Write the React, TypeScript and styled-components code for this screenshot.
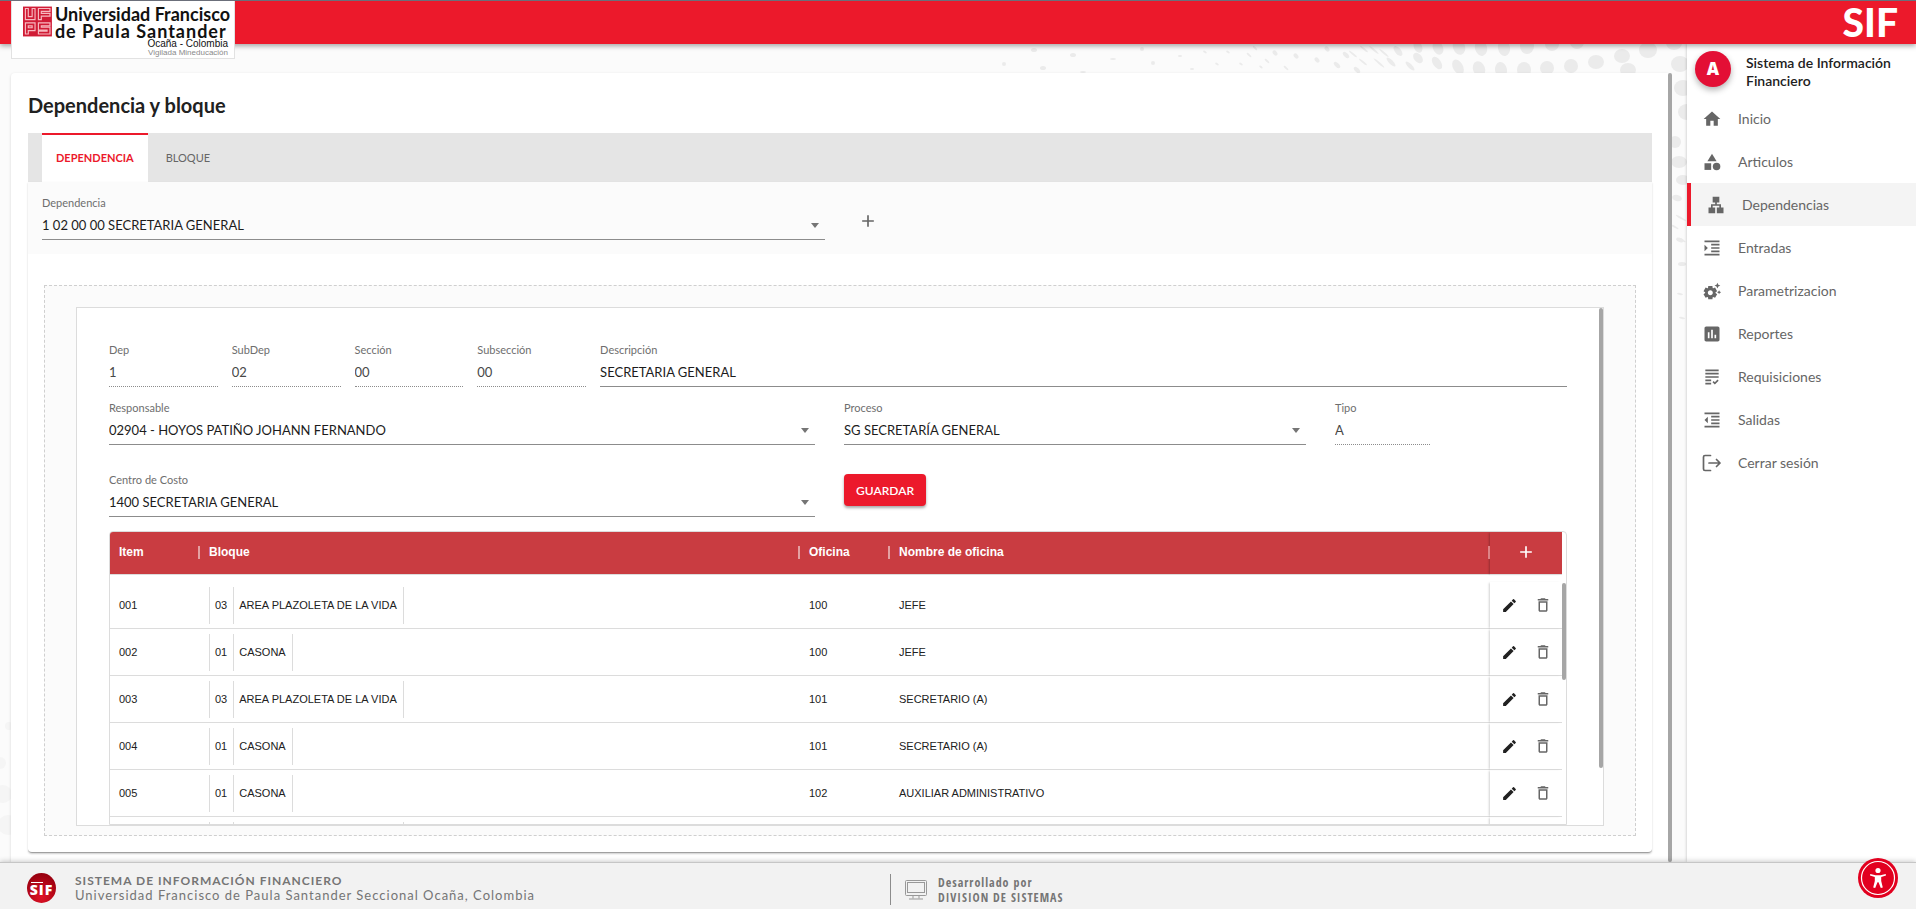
import React from "react";
import styled, { createGlobalStyle, css } from "styled-components";
import {
  MdAdd,
  MdAssessment,
  MdCategory,
  MdDeleteOutline,
  MdEdit,
  MdFormatIndentDecrease,
  MdFormatIndentIncrease,
  MdGrading,
  MdHome,
  MdLan,
  MdSettingsSuggest,
} from "react-icons/md";

const RED = "#ec192b";
const LINE = "#dcdcdc";
const THUMB = "#a6a6a6";
const SANS = '"Lato", "Open Sans", sans-serif';

const GlobalStyle = createGlobalStyle`
  *, *::before, *::after { box-sizing: border-box; }
  body { margin: 0; font-family: ${SANS}; color: #212121; background: #fbfbfb; }
  button, input, select { font: inherit; color: inherit; }
`;

/* ---------- Shell ---------- */

const Shell = styled.div`
  display: flex;
  flex-direction: column;
  height: 100vh;
  overflow: hidden;
`;

const Header = styled.header`
  position: relative;
  z-index: 2;
  display: flex;
  justify-content: space-between;
  align-items: flex-start;
  height: 44px;
  padding: 0 18px 0 11px;
  border-top: 1px solid #6b6f7a;
  background: ${RED};
  box-shadow: 0 2px 5px rgba(0, 0, 0, 0.35);
`;

const Brand = styled.a`
  display: flex;
  gap: 3px;
  width: 224px;
  height: 58px;
  padding: 5px 4px 0 11px;
  border: 1px solid #e2e2e2;
  border-top: 0;
  background: #fff;
  color: #111;
  text-decoration: none;
  white-space: nowrap;
`;

const BrandText = styled.span`
  display: flex;
  flex-direction: column;
  font-weight: 700;
  font-size: 18px;
  line-height: 17px;
`;

const BrandSecond = styled.span`
  letter-spacing: 1px;
`;

const BrandPlace = styled.span`
  align-self: flex-end;
  padding-right: 2px;
  font-family: "Liberation Sans", sans-serif;
  font-weight: 400;
  font-size: 10px;
  line-height: 8px;
`;

const BrandNote = styled(BrandPlace)`
  font-size: 8px;
  line-height: 9px;
  color: #8a8a8a;
`;

const AppName = styled.span`
  font-weight: 900;
  font-size: 39px;
  line-height: 42px;
  color: #fff;
`;

const Body = styled.div`
  position: relative;
  display: flex;
  flex: 1;
  min-height: 0;
`;

const Backdrop = styled.svg`
  position: absolute;
  top: 0;
  right: 229px;
`;

const CornerBackdrop = styled.svg`
  position: absolute;
  bottom: 0;
  left: 0;
`;

const Main = styled.main`
  position: relative;
  display: flex;
  flex: 1;
  min-width: 0;
  padding: 29px 15px 0 11px;
`;

const Card = styled.section`
  display: flex;
  flex: 1;
  flex-direction: column;
  min-width: 0;
  padding: 17px 16px 9px 17px;
  border-radius: 4px 0 0 0;
  background: #fff;
  box-shadow: 0 1px 3px rgba(0, 0, 0, 0.15);
`;

const Thumb = styled.div<{ $length: string }>`
  flex: none;
  width: 4px;
  height: ${(p) => p.$length};
  border-radius: 2px;
  background: ${THUMB};
`;

const Title = styled.h1`
  margin: 0 0 13px;
  font-size: 20px;
  line-height: 30px;
  font-weight: 700;
`;

/* ---------- Tabs ---------- */

const Tabs = styled.div`
  display: flex;
  flex: none;
  height: 49px;
  padding-left: 14px;
  background: #e5e5e5;
`;

const Tab = styled.button<{ $active?: boolean }>`
  padding: 0 ${(p) => (p.$active ? "14px" : "18px")} 2px;
  border: 0;
  border-top: 2px solid transparent;
  background: none;
  font-size: 11px;
  color: #666;
  ${(p) =>
    p.$active &&
    css`
      border-top-color: ${RED};
      background: #fff;
      color: ${RED};
      font-weight: 700;
    `}
`;

const Panel = styled.div`
  display: flex;
  flex: 1;
  flex-direction: column;
  min-height: 0;
  border-bottom: 1px solid #a0a0a0;
  border-radius: 0 0 4px 4px;
  box-shadow: 0 1px 2px rgba(0, 0, 0, 0.2);
`;

const FilterBar = styled.div`
  display: grid;
  grid-template-columns: 782fr 29px 797fr;
  height: 72px;
  padding: 12px 0 0 14px;
  background: #fbfbfb;
`;

const Dashed = styled.div`
  display: flex;
  flex: 1;
  min-height: 0;
  margin: 31px 16px 16px;
  padding: 21px 31px 9px;
  border: 1px dashed #cfcfcf;
  background: #fbfbfb;
`;

const Sheet = styled.div`
  display: flex;
  flex: 1;
  min-width: 0;
  border: 1px solid ${LINE};
  background: #fff;
`;

const Form = styled.form`
  display: flex;
  flex: 1;
  flex-direction: column;
  min-width: 0;
  padding: 33px 32px 0 32px;
`;

/* ---------- Fields ---------- */

const FieldBox = styled.div<{ $disabled?: boolean }>`
  position: relative;
  display: flex;
  flex-direction: column;
  min-width: 0;
  height: 46px;
  border-bottom: 1px ${(p) => (p.$disabled ? "dotted" : "solid")} #8c8c8c;
  label {
    font-size: 11px;
    line-height: 18px;
    color: #6e6e6e;
  }
  input,
  select {
    width: 100%;
    height: 26px;
    padding: 0;
    border: 0;
    outline: 0;
    appearance: none;
    background: none;
    font-size: 13px;
    opacity: 1;
    color: ${(p) => (p.$disabled ? "#484848" : "#1c1c1c")};
  }
  svg {
    position: absolute;
    right: 6px;
    bottom: 11px;
    pointer-events: none;
  }
`;

const CodesRow = styled.div`
  display: grid;
  grid-template-columns: repeat(4, 9fr) 80fr;
  gap: 14px;
  margin-bottom: 12px;
`;

const WideRow = styled.div`
  display: grid;
  grid-template-columns: 706fr 462fr 232fr;
  gap: 29px;
`;

const CostRow = styled(WideRow)`
  margin-top: 26px;
`;

const TypeSlot = styled.div`
  width: 41%;
`;

const SaveButton = styled.button`
  justify-self: start;
  height: 32px;
  margin-top: 3px;
  padding: 0 12px;
  border: 0;
  border-radius: 4px;
  background: ${RED};
  color: #fff;
  font-size: 12px;
  font-weight: 600;
  box-shadow: 0 2px 3px rgba(0, 0, 0, 0.35);
`;

const IconButton = styled.button`
  display: inline-flex;
  align-items: center;
  justify-content: center;
  padding: 0;
  border: 0;
  background: none;
`;

const AddDependency = styled(IconButton)`
  grid-column: 3;
  justify-self: start;
  height: 54px;
  padding-left: 4px;
  color: #666;
`;

function Select({ id, label, value }: { id: string; label: string; value: string }) {
  return (
    <FieldBox>
      <label htmlFor={id}>{label}</label>
      <select id={id} defaultValue={value}>
        <option>{value}</option>
      </select>
      <svg width="8" height="5" viewBox="0 0 8 5" fill="#757575">
        <path d="M0 0h8L4 5z" />
      </svg>
    </FieldBox>
  );
}

function Input(p: { id: string; label: string; value: string; disabled?: boolean }) {
  return (
    <FieldBox $disabled={p.disabled}>
      <label htmlFor={p.id}>{p.label}</label>
      <input id={p.id} defaultValue={p.value} disabled={p.disabled} />
    </FieldBox>
  );
}

/* ---------- Offices table ---------- */

const TableBox = styled.div`
  display: flex;
  flex: 1;
  align-items: flex-start;
  min-height: 0;
  margin-top: 14px;
  overflow: hidden;
  border: 1px solid ${LINE};
  border-radius: 4px 4px 0 0;
`;

const TableScroller = styled.div`
  flex: 1;
  min-width: 0;
`;

const Table = styled.table`
  width: 100%;
  table-layout: fixed;
  border-collapse: separate;
  border-spacing: 0;
  font-family: "Liberation Sans", Arial, sans-serif;
  font-size: 11px;
  tbody::before {
    content: "";
    display: table-row;
    height: 7px;
  }
`;

const Th = styled.th<{ $width?: number }>`
  width: ${(p) => (p.$width ? `${p.$width}px` : "auto")};
  height: 43px;
  padding: 0 0 2px 9px;
  border-bottom: 1px solid ${LINE};
  background: #c93c41;
  color: #fff;
  font-size: 12px;
  text-align: left;
`;

const Heading = styled.span<{ $last?: boolean }>`
  display: flex;
  align-items: center;
  justify-content: space-between;
  &::after {
    content: "";
    width: 2px;
    height: 13px;
    background: ${(p) => (p.$last ? "#dd8487" : "#e4a0a2")};
  }
`;

const ActionTh = styled(Th)`
  padding: 0;
  text-align: center;
  box-shadow: -2px 0 2px -1px rgba(0, 0, 0, 0.25);
`;

const Td = styled.td`
  height: 47px;
  padding: 0 0 0 9px;
  border-bottom: 1px solid ${LINE};
`;

const ActionTd = styled(Td)`
  padding: 0 0 0 11px;
  box-shadow: -2px 0 2px -1px rgba(0, 0, 0, 0.18);
`;

const Actions = styled.span`
  display: flex;
  gap: 16px;
`;

const Block = styled.span`
  display: inline-flex;
  height: 37px;
  line-height: 36px;
  border-left: 1px solid ${LINE};
  vertical-align: middle;
`;

const BlockPart = styled.span<{ $min?: number }>`
  min-width: ${(p) => p.$min ?? 0}px;
  padding: 0 6px 0 5px;
  border-right: 1px solid ${LINE};
  white-space: nowrap;
`;

const TableTrack = styled.div`
  padding-top: 51px;
`;

type Office = { item: string; code: string; block: string; office: string; name: string };

const OFFICES: Office[] = [
  { item: "001", code: "03", block: "AREA PLAZOLETA DE LA VIDA", office: "100", name: "JEFE" },
  { item: "002", code: "01", block: "CASONA", office: "100", name: "JEFE" },
  { item: "003", code: "03", block: "AREA PLAZOLETA DE LA VIDA", office: "101", name: "SECRETARIO (A)" },
  { item: "004", code: "01", block: "CASONA", office: "101", name: "SECRETARIO (A)" },
  { item: "005", code: "01", block: "CASONA", office: "102", name: "AUXILIAR ADMINISTRATIVO" },
];

function OfficesTable() {
  return (
    <TableBox>
      <TableScroller>
        <Table>
          <thead>
            <tr>
              <Th $width={90}><Heading>Item</Heading></Th>
              <Th><Heading>Bloque</Heading></Th>
              <Th $width={90}><Heading>Oficina</Heading></Th>
              <Th><Heading $last>Nombre de oficina</Heading></Th>
              <ActionTh $width={72}>
                <IconButton type="button" aria-label="Agregar oficina">
                  <MdAdd size={20} />
                </IconButton>
              </ActionTh>
            </tr>
          </thead>
          <tbody>
            {OFFICES.map((o) => (
              <tr key={o.item}>
                <Td>{o.item}</Td>
                <Td>
                  <Block>
                    <BlockPart>{o.code}</BlockPart>
                    <BlockPart>{o.block}</BlockPart>
                  </Block>
                </Td>
                <Td>{o.office}</Td>
                <Td>{o.name}</Td>
                <ActionTd>
                  <Actions>
                    <IconButton type="button" aria-label="Editar">
                      <MdEdit size={17} color="#212121" />
                    </IconButton>
                    <IconButton type="button" aria-label="Eliminar">
                      <MdDeleteOutline size={18} color="#666" />
                    </IconButton>
                  </Actions>
                </ActionTd>
              </tr>
            ))}
            <tr>
              <Td />
              <Td>
                <Block>
                  <BlockPart $min={24} />
                  <BlockPart $min={170} />
                </Block>
              </Td>
              <Td />
              <Td />
              <ActionTd />
            </tr>
          </tbody>
        </Table>
      </TableScroller>
      <TableTrack>
        <Thumb $length="97px" />
      </TableTrack>
    </TableBox>
  );
}

/* ---------- Sidebar ---------- */

const Sidebar = styled.aside`
  position: relative;
  flex: none;
  width: 229px;
  background: #fff;
  box-shadow: 0 0 3px rgba(0, 0, 0, 0.25);
`;

const Profile = styled.div`
  display: flex;
  gap: 15px;
  height: 53px;
  padding: 7px 16px 0 8px;
`;

const Avatar = styled.span`
  flex: none;
  width: 36px;
  height: 36px;
  border-radius: 50%;
  background: #e30f35;
  color: #fff;
  font-family: "Open Sans", sans-serif;
  font-size: 17px;
  font-weight: 800;
  line-height: 36px;
  text-align: center;
  box-shadow: 0 3px 6px rgba(0, 0, 0, 0.3);
`;

const ProfileName = styled.strong`
  padding-top: 3px;
  font-size: 14px;
  line-height: 18px;
  font-weight: 600;
`;

const NavLink = styled.a<{ $active?: boolean }>`
  display: flex;
  align-items: center;
  gap: 16px;
  height: 43px;
  padding-left: 15px;
  color: #666;
  font-size: 14px;
  text-decoration: none;
  svg {
    width: 20px;
    height: 20px;
  }
  ${(p) =>
    p.$active &&
    css`
      border-left: 4px solid ${RED};
      background: #f4f4f4;
    `}
`;

function LogoutIcon() {
  return (
    <svg viewBox="0 0 20 20" fill="none" stroke="#666" strokeWidth="1.7" strokeLinecap="round" strokeLinejoin="round">
      <path d="M8.500 2.500H3Q1.500 2.500 1.500 4v12q0 1.500 1.500 1.500h5.500M7 10h11M14.500 6.500L18 10l-3.500 3.500" />
    </svg>
  );
}

const NAV = [
  { label: "Inicio", icon: MdHome },
  { label: "Articulos", icon: MdCategory },
  { label: "Dependencias", icon: MdLan, active: true },
  { label: "Entradas", icon: MdFormatIndentIncrease },
  { label: "Parametrizacion", icon: MdSettingsSuggest },
  { label: "Reportes", icon: MdAssessment },
  { label: "Requisiciones", icon: MdGrading },
  { label: "Salidas", icon: MdFormatIndentDecrease },
  { label: "Cerrar sesión", icon: LogoutIcon },
];

/* ---------- Footer ---------- */

const Footer = styled.footer`
  position: relative;
  z-index: 2;
  display: grid;
  grid-template-columns: 890fr 1026fr;
  height: 47px;
  border-top: 1px solid #c6c6c6;
  background: #f2f2f2;
  box-shadow: 0 -1px 5px rgba(0, 0, 0, 0.2);
  color: #757575;
`;

const FooterLeft = styled.div`
  display: flex;
  align-items: center;
  gap: 19px;
  padding: 4px 0 0 27px;
  font-size: 13px;
  line-height: 15px;
  letter-spacing: 1px;
  white-space: nowrap;
  strong {
    font-size: 12px;
  }
`;

const Lines = styled.div`
  display: flex;
  flex-direction: column;
`;

const FooterRight = styled.div`
  display: flex;
  align-items: center;
  align-self: end;
  gap: 11px;
  height: 31px;
  margin-bottom: 4px;
  padding-left: 14px;
  border-left: 1px solid #8c8c8c;
  font-family: "Liberation Sans Narrow", "Open Sans Condensed", "Lato", sans-serif;
  font-weight: 300;
  font-size: 12px;
  line-height: 15px;
  letter-spacing: 1px;
`;

const AccessButton = styled(IconButton)`
  position: fixed;
  z-index: 3;
  right: 18px;
  bottom: 11px;
`;

function Crest() {
  return (
    <svg width="30" height="31" viewBox="0 0 30 31">
      <rect width="30" height="31" fill="#d01c36" />
      <g fill="none" stroke="#f7b9c0" strokeWidth="1.200">
        <path d="M2.500 2v11.500h10V2H9.500v8.500h-4V2zM16 13.500V2h12v3h-9v2h9v3h-9v3.500z" />
        <path d="M2.500 28.500V17h10v8h-7v3.500zM5.500 20h4v2h-4zM16 17h12v3h-9v1.500h9v7H16v-3h9v-1h-9z" />
      </g>
    </svg>
  );
}

function Seal() {
  return (
    <svg width="29" height="30" viewBox="0 0 29 30">
      <defs>
        <radialGradient id="seal" cx="50%" cy="80%" r="75%">
          <stop offset="0" stopColor="#e01226" />
          <stop offset="1" stopColor="#98000f" />
        </radialGradient>
      </defs>
      <ellipse cx="14.500" cy="15" rx="14.500" ry="15" fill="url(#seal)" />
      <path d="M4 9.500h12" stroke="#fff" strokeWidth="1" />
      <text x="14.500" y="22" fill="#fff" textAnchor="middle" fontFamily="Open Sans, sans-serif" fontWeight="800" fontSize="14">
        SIF
      </text>
    </svg>
  );
}

function Monitor() {
  return (
    <svg width="22" height="20" viewBox="0 0 22 20" fill="none" stroke="#999">
      <rect x="0.500" y="0.500" width="21" height="15" rx="1" />
      <rect x="2.500" y="2.500" width="17" height="10" />
      <path d="M8 15.500v3M14 15.500v3M4 19h14" />
    </svg>
  );
}

/* Halftone dots behind the card: centre x, centre y, radii, tilt */
const DOTS: [number, number, number, number, number][] = [
  [431, 3, 4, 6, -25], [451, 4, 5, 7, -25], [472, 3, 6, 8, -20], [494, 4, 6, 8, -15],
  [517, 4, 6, 8, -10], [540, 2, 7, 8, 0], [565, 0, 7, 7, 0], [590, -2, 7, 7, 0],
  [411, 7, 3, 6, -40], [431, 14, 4, 6, -40], [450, 19, 4, 7, -35], [471, 23, 5, 8, -30],
  [492, 25, 6, 8, -20], [514, 26, 6, 8, -10], [537, 26, 7, 8, 0], [560, 24, 7, 7, 0],
  [584, 22, 7, 7, 0], [609, 18, 8, 7, 0], [635, 12, 8, 7, 0], [661, 6, 9, 8, 0],
  [641, 26, 8, 7, 0], [693, 20, 9, 8, 0], [687, -1, 8, 7, 0], [696, 44, 9, 8, 0],
  [700, 68, 9, 8, 0], [688, 98, 6, 6, 0], [692, 118, 8, 6, 0], [696, 136, 7, 5, 0],
  [690, 154, 5, 3, 15], [694, 174, 6, 1, 30], [688, 183, 4, 1, 30], [695, 196, 4, 1, 30],
  [693, 196, 4, 2, 20], [695, 220, 4, 2, 0], [693, 250, 3, 1, 10], [695, 274, 3, 1, 10],
  [377, 5, 1, 5, -50], [387, 6, 1, 6, -50], [366, 10, 1, 5, -50], [397, 9, 1, 6, -50],
  [376, 18, 1, 5, -50], [392, 19, 1, 7, -50], [404, 18, 2, 6, -45], [423, 22, 2, 6, -45],
  [359, 11, 2, 4, -45], [350, 21, 2, 4, -45], [370, 26, 2, 4, -45], [340, 5, 2, 3, -40],
  [330, 16, 2, 3, -40], [309, 12, 2, 3, -40], [288, 9, 2, 3, -40], [268, 4, 1, 3, -45],
  [299, 24, 1, 3, -50], [280, 17, 1, 3, -50], [262, 11, 1, 3, -50], [274, 23, 1, 2, -50],
  [254, 20, 1, 2, -60], [241, 8, 1, 2, -60], [230, 20, 1, 2, -60], [218, 8, 1, 2, -60],
  [205, 25, 2, 1, 0], [193, 12, 2, 1, 0], [166, 19, 2, 2, 0], [155, 5, 2, 2, 0],
  [126, 15, 3, 1, 0], [86, 11, 3, 2, 0], [96, 28, 3, 1, 0], [56, 24, 3, 2, 0],
  [47, 6, 3, 2, 0], [17, 20, 2, 2, 0],
];

function Dots() {
  return (
    <Backdrop width="700" height="300" viewBox="0 0 700 300" fill="#ebebeb" aria-hidden="true">
      {DOTS.map(([x, y, rx, ry, tilt], i) => (
        <ellipse key={i} cx={x} cy={y} rx={rx} ry={ry} transform={`rotate(${tilt} ${x} ${y})`} />
      ))}
    </Backdrop>
  );
}

export default function App() {
  return (
    <Shell>
      <GlobalStyle />
      <Header>
        <Brand href="#">
          <Crest />
          <BrandText>
            <span>Universidad Francisco</span>
            <BrandSecond>de Paula Santander</BrandSecond>
            <BrandPlace>Ocaña - Colombia</BrandPlace>
            <BrandNote>Vigilada Mineducación</BrandNote>
          </BrandText>
        </Brand>
        <AppName>SIF</AppName>
      </Header>
      <Body>
        <Dots />
        <CornerBackdrop width="11" height="150" viewBox="0 0 11 150" fill="#f5f5f5" aria-hidden="true">
          <circle cx="9" cy="14" r="4" />
          <circle cx="0" cy="51" r="6" />
          <circle cx="3" cy="82" r="9" />
          <circle cx="8" cy="113" r="10" />
        </CornerBackdrop>
        <Main>
          <Card>
            <Title>Dependencia y bloque</Title>
            <Tabs role="tablist">
              <Tab type="button" role="tab" aria-selected="true" $active>DEPENDENCIA</Tab>
              <Tab type="button" role="tab" aria-selected="false">BLOQUE</Tab>
            </Tabs>
            <Panel>
              <FilterBar>
                <Select id="dependencia" label="Dependencia" value="1 02 00 00 SECRETARIA GENERAL" />
                <AddDependency type="button" aria-label="Agregar dependencia">
                  <MdAdd size={20} />
                </AddDependency>
              </FilterBar>
              <Dashed>
                <Sheet>
                  <Form>
                    <CodesRow>
                      <Input id="dep" label="Dep" value="1" disabled />
                      <Input id="subdep" label="SubDep" value="02" disabled />
                      <Input id="seccion" label="Sección" value="00" disabled />
                      <Input id="subseccion" label="Subsección" value="00" disabled />
                      <Input id="descripcion" label="Descripción" value="SECRETARIA GENERAL" />
                    </CodesRow>
                    <WideRow>
                      <Select id="responsable" label="Responsable" value="02904 - HOYOS PATIÑO JOHANN FERNANDO" />
                      <Select id="proceso" label="Proceso" value="SG SECRETARÍA GENERAL" />
                      <TypeSlot>
                        <Input id="tipo" label="Tipo" value="A" disabled />
                      </TypeSlot>
                    </WideRow>
                    <CostRow>
                      <Select id="centro" label="Centro de Costo" value="1400 SECRETARIA GENERAL" />
                      <SaveButton type="button">GUARDAR</SaveButton>
                    </CostRow>
                    <OfficesTable />
                  </Form>
                  <Thumb $length="89%" />
                </Sheet>
              </Dashed>
            </Panel>
          </Card>
          <Thumb $length="100%" />
        </Main>
        <Sidebar>
          <Profile>
            <Avatar>A</Avatar>
            <ProfileName>Sistema de Información Financiero</ProfileName>
          </Profile>
          <nav>
            {NAV.map(({ label, icon: Icon, active }) => (
              <NavLink key={label} href="#" $active={active}>
                <Icon />
                {label}
              </NavLink>
            ))}
          </nav>
        </Sidebar>
      </Body>
      <Footer>
        <FooterLeft>
          <Seal />
          <Lines>
            <strong>SISTEMA DE INFORMACIÓN FINANCIERO</strong>
            <span>Universidad Francisco de Paula Santander Seccional Ocaña, Colombia</span>
          </Lines>
        </FooterLeft>
        <FooterRight>
          <Monitor />
          <Lines>
            <span>Desarrollado por</span>
            <strong>DIVISION DE SISTEMAS</strong>
          </Lines>
        </FooterRight>
      </Footer>
      <AccessButton type="button" aria-label="Accesibilidad">
        <svg width="40" height="40" viewBox="0 0 40 40">
          <circle cx="20" cy="20" r="20" fill="#e2001f" />
          <circle cx="20" cy="20" r="16.500" fill="none" stroke="#fff" strokeWidth="1.200" />
          <circle cx="20" cy="12.500" r="2.600" fill="#fff" />
          <path d="M12.300 16l5.200 1.300h5L27.700 16l.3 1.500-4.800 1.600v4l1.600 6.300-2 .6-2.300-5.800h-1L17.200 30l-2-.6 1.600-6.300v-4L12 17.500z" fill="#fff" />
        </svg>
      </AccessButton>
    </Shell>
  );
}
